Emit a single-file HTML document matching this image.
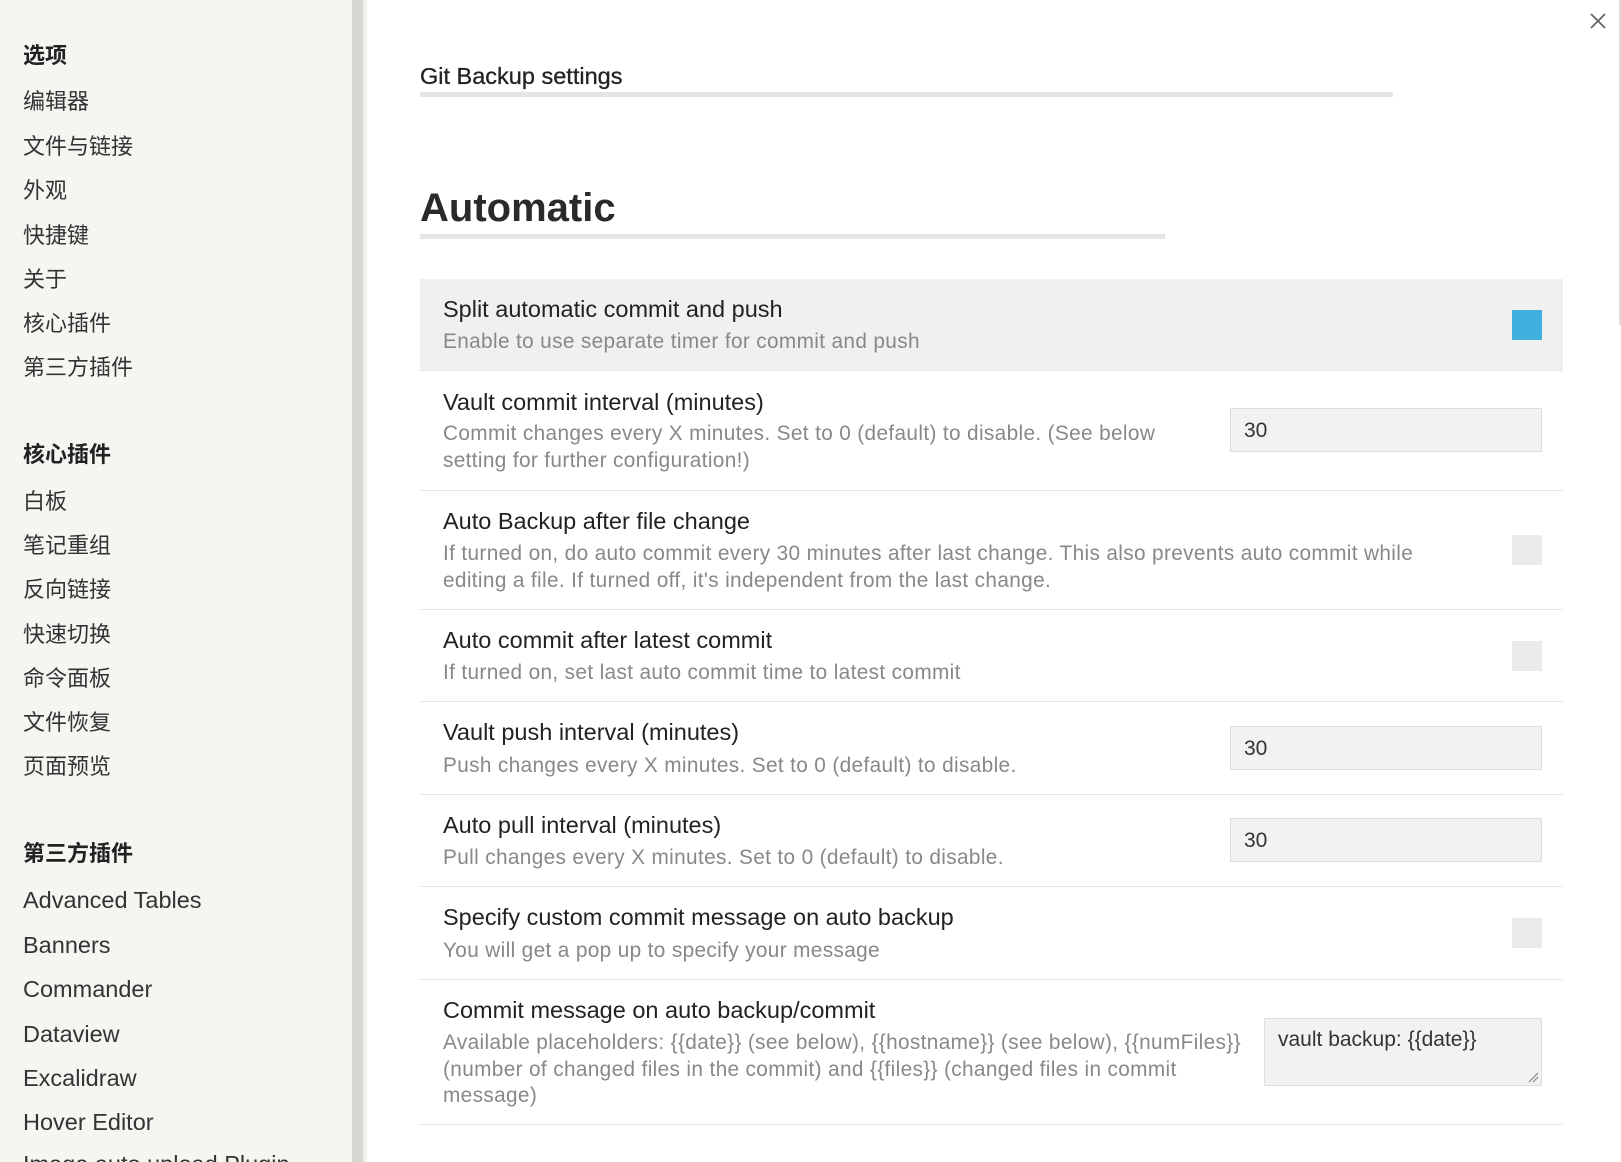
<!DOCTYPE html>
<html><head><meta charset="utf-8"><style>
*{margin:0;padding:0;box-sizing:border-box}
body{width:1621px;height:1162px;overflow:hidden;background:#fff;font-family:"Liberation Sans","Noto Sans CJK SC",sans-serif;position:relative}
#side{position:absolute;left:0;top:0;width:352px;height:1162px;background:#f6f5f2;overflow:hidden}
#div1{position:absolute;left:352px;top:0;width:11px;height:1162px;background:#d8d6d1}
#div2{position:absolute;left:363px;top:0;width:4px;height:1162px;background:#f2f1ee}
.si{position:absolute;left:23px;font-size:22px;color:#333;line-height:28px;white-space:nowrap}
.en{font-size:23.5px}
.sh{font-weight:bold;color:#222}
.a{position:absolute;white-space:nowrap}
.t{font-size:23.5px;color:#222;line-height:26px;left:443px}
.d{font-size:20.8px;letter-spacing:0.35px;color:#888;line-height:26.5px;left:443px}
.sep{position:absolute;left:420px;width:1143px;height:1px;background:#e6e6e6}
.inp{position:absolute;left:1230px;width:312px;height:44px;background:#f2f2f2;border:1px solid #ddd;font-size:21px;color:#333;padding:10px 13px}
.tg{position:absolute;left:1512px;width:30px;height:30px;background:#ecebe9}
</style></head><body>
<div id="side">
<div class="si sh" style="top:42px">选项</div>
<div class="si" style="top:88px">编辑器</div>
<div class="si" style="top:133px">文件与链接</div>
<div class="si" style="top:177px">外观</div>
<div class="si" style="top:222px">快捷键</div>
<div class="si" style="top:266px">关于</div>
<div class="si" style="top:310px">核心插件</div>
<div class="si" style="top:354px">第三方插件</div>
<div class="si sh" style="top:441px">核心插件</div>
<div class="si" style="top:488px">白板</div>
<div class="si" style="top:532px">笔记重组</div>
<div class="si" style="top:576px">反向链接</div>
<div class="si" style="top:621px">快速切换</div>
<div class="si" style="top:665px">命令面板</div>
<div class="si" style="top:709px">文件恢复</div>
<div class="si" style="top:753px">页面预览</div>
<div class="si sh" style="top:840px">第三方插件</div>
<div class="si en" style="top:886px">Advanced Tables</div>
<div class="si en" style="top:931px">Banners</div>
<div class="si en" style="top:975px">Commander</div>
<div class="si en" style="top:1020px">Dataview</div>
<div class="si en" style="top:1064px">Excalidraw</div>
<div class="si en" style="top:1108px">Hover Editor</div>
<div class="si en" style="top:1150px">Image auto upload Plugin</div>
</div>
<div id="div1"></div><div id="div2"></div>
<div style="position:absolute;left:1619px;top:0;width:2px;height:325px;background:#ddd"></div>
<svg style="position:absolute;left:1589px;top:12px" width="18" height="18" viewBox="0 0 18 18"><path d="M2 2L16 16M16 2L2 16" stroke="#666" stroke-width="1.8"/></svg>

<div class="a" style="left:420px;top:63px;font-size:23.5px;color:#222;-webkit-text-stroke:0.3px #222">Git Backup settings</div>
<div style="position:absolute;left:420px;top:92px;width:973px;height:5px;background:#e5e5e5"></div>
<div class="a" style="left:420px;top:186px;font-size:40px;font-weight:bold;color:#2a2a2a">Automatic</div>
<div style="position:absolute;left:420px;top:234px;width:745px;height:5px;background:#e5e5e5"></div>

<div style="position:absolute;left:420px;top:279px;width:1143px;height:92px;background:#f0f0f0;border-bottom:1px solid #e6e6e6"></div>
<div class="a t" style="top:296px">Split automatic commit and push</div>
<div class="a d" style="top:329px">Enable to use separate timer for commit and push</div>
<div style="position:absolute;left:1512px;top:310px;width:30px;height:30px;background:#42b0de"></div>

<div class="a t" style="top:389px">Vault commit interval (minutes)</div>
<div class="a d" style="top:421px">Commit changes every X minutes. Set to 0 (default) to disable. (See below<br>setting for further configuration!)</div>
<div class="inp" style="top:408px">30</div>
<div class="sep" style="top:490px"></div>

<div class="a t" style="top:508px">Auto Backup after file change</div>
<div class="a d" style="top:541px">If turned on, do auto commit every 30 minutes after last change. This also prevents auto commit while<br>editing a file. If turned off, it's independent from the last change.</div>
<div class="tg" style="top:535px"></div>
<div class="sep" style="top:609px"></div>

<div class="a t" style="top:627px">Auto commit after latest commit</div>
<div class="a d" style="top:660px">If turned on, set last auto commit time to latest commit</div>
<div class="tg" style="top:641px"></div>
<div class="sep" style="top:701px"></div>

<div class="a t" style="top:719px">Vault push interval (minutes)</div>
<div class="a d" style="top:753px">Push changes every X minutes. Set to 0 (default) to disable.</div>
<div class="inp" style="top:726px">30</div>
<div class="sep" style="top:794px"></div>

<div class="a t" style="top:812px">Auto pull interval (minutes)</div>
<div class="a d" style="top:845px">Pull changes every X minutes. Set to 0 (default) to disable.</div>
<div class="inp" style="top:818px">30</div>
<div class="sep" style="top:886px"></div>

<div class="a t" style="top:904px">Specify custom commit message on auto backup</div>
<div class="a d" style="top:938px">You will get a pop up to specify your message</div>
<div class="tg" style="top:918px"></div>
<div class="sep" style="top:979px"></div>

<div class="a t" style="top:997px">Commit message on auto backup/commit</div>
<div class="a d" style="top:1030px">Available placeholders: {{date}} (see below), {{hostname}} (see below), {{numFiles}}<br>(number of changed files in the commit) and {{files}} (changed files in commit<br>message)</div>
<div class="inp" style="left:1264px;width:278px;height:68px;top:1018px;padding:9px 13px">vault backup: {{date}}</div>
<svg style="position:absolute;left:1527px;top:1071px" width="12" height="12"><path d="M2 11L11 2M6 11L11 6" stroke="#777" stroke-width="1"/></svg>
<div class="sep" style="top:1124px"></div>
</body></html>
